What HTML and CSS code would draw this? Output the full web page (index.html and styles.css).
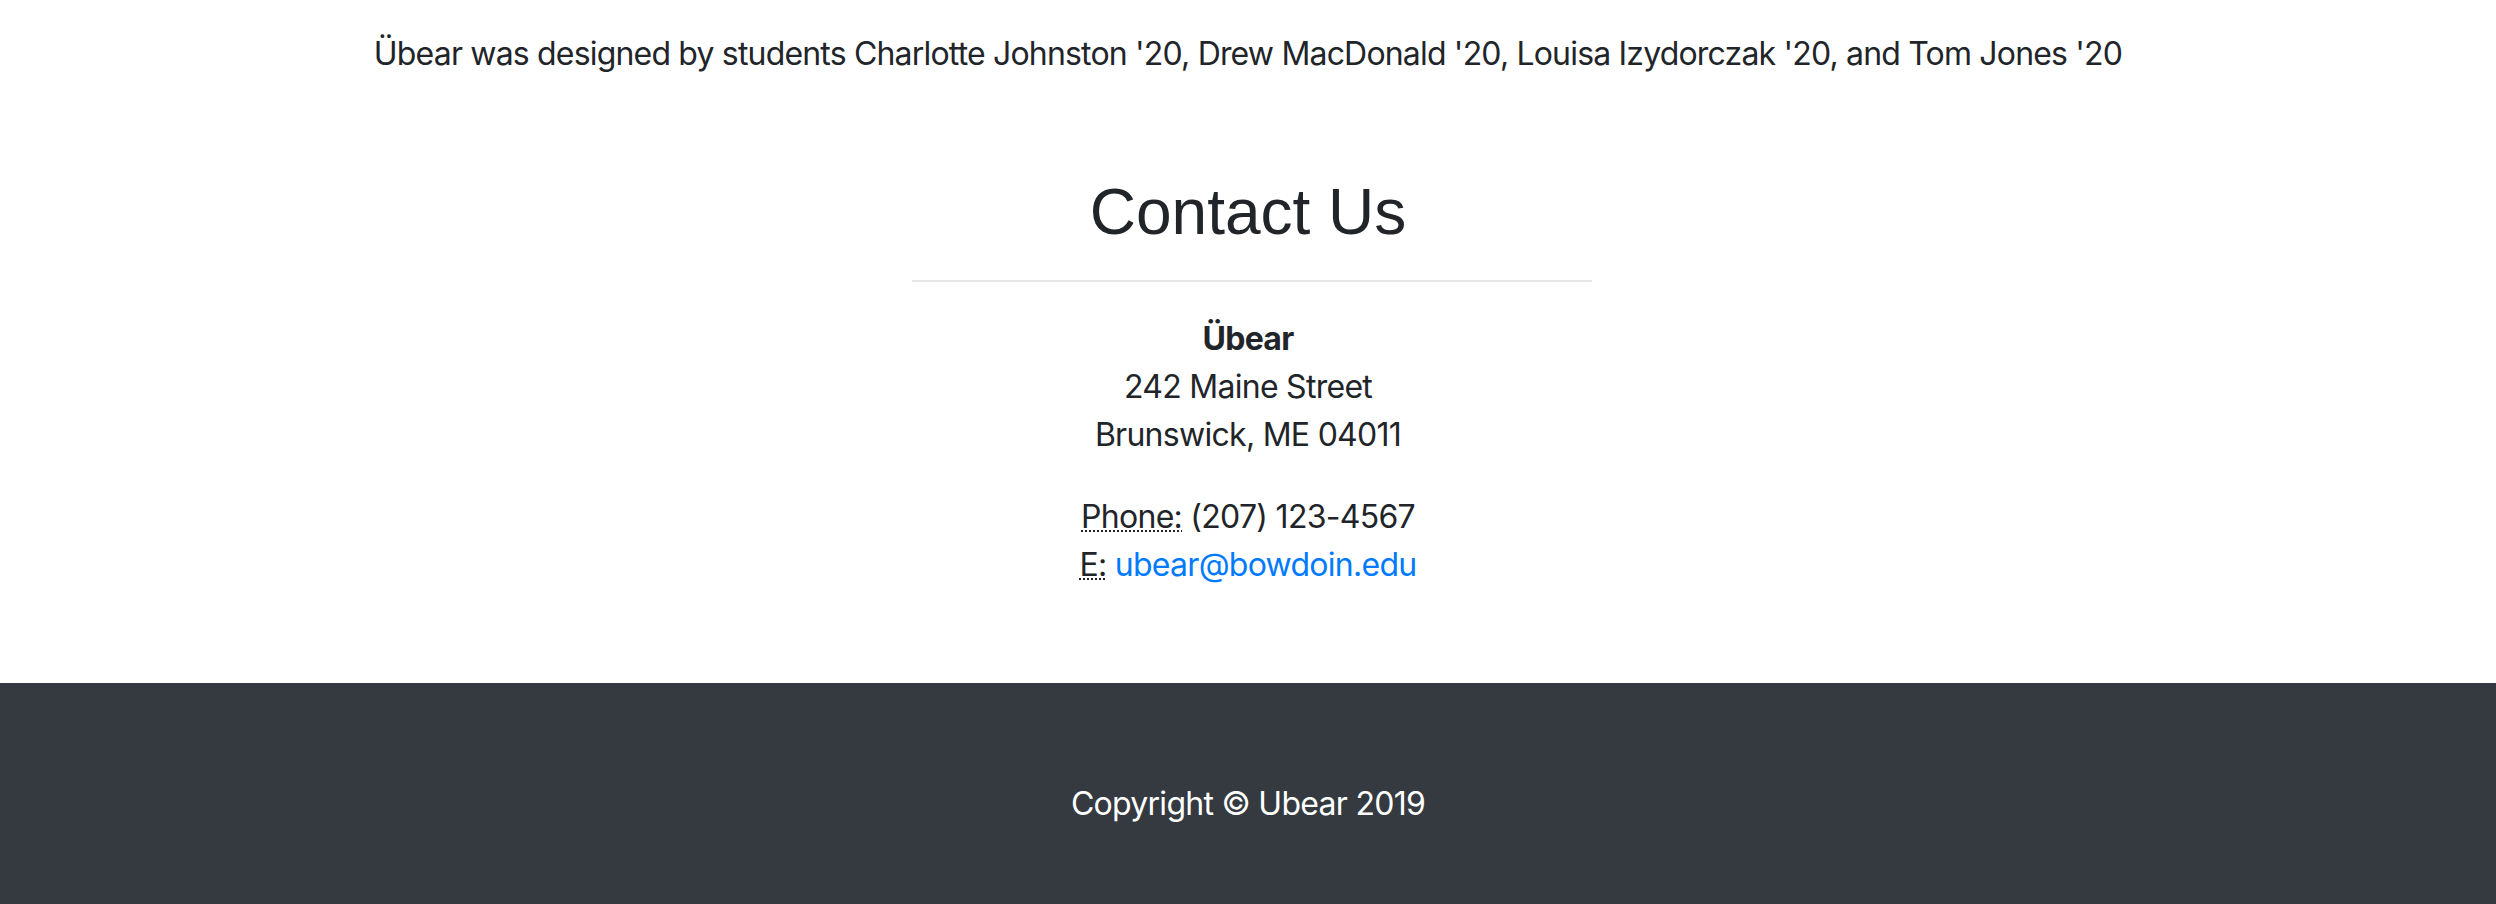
FILE: index.html
```html
<!DOCTYPE html>
<html lang="en">
<head>
<meta charset="utf-8">
<title>Übear – Contact</title>
<link rel="stylesheet" href="styles.css">
</head>
<body>
<main class="page">
  <p class="credits">Übear was designed by students Charlotte Johnston '20, Drew MacDonald '20, Louisa Izydorczak '20, and Tom Jones '20</p>
  <section class="contact">
    <h2 class="contact-title">Contact Us</h2>
    <hr class="divider">
    <address class="address address-main">
      <strong>Übear</strong><br>
      242 Maine Street<br>
      Brunswick, ME 04011
    </address>
    <address class="address">
      <abbr title="Phone">Phone:</abbr> (207) 123-4567<br>
      <abbr title="Email">E:</abbr> <a class="mail" href="mailto:ubear@bowdoin.edu">ubear@bowdoin.edu</a>
    </address>
  </section>
</main>
<footer class="site-footer">
  <p class="copyright">Copyright © Ubear 2019</p>
</footer>
</body>
</html>
```

FILE: styles.css
```css
html, body {
  margin: 0;
  padding: 0;
  background: #ffffff;
}

body {
  color: #212529;
  font-family: Inter, "Noto Sans", "Liberation Sans", sans-serif;
  font-size: 32px;
  line-height: 48px;
  letter-spacing: -0.72px;
}

.page {
  text-align: center;
}

.credits {
  margin: 0;
  padding-top: 30px;
  font-size: 32px;
  line-height: 48px;
  letter-spacing: -0.82px;
  color: #212529;
}

.contact {
  padding-bottom: 62px;
}

.contact-title {
  margin: 96px 0 0;
  font-family: "Liberation Sans", Arial, sans-serif;
  font-weight: 400;
  font-size: 64px;
  line-height: 1.2;
  letter-spacing: 0;
  color: #212529;
}

.divider {
  box-sizing: border-box;
  width: 680px;
  height: 0;
  margin: 29px 0 33px calc(50% - 336px);
  border: 0;
  border-top: 2px solid #e5e5e5;
}

.address {
  margin: 0 0 32px;
  font-style: normal;
  font-size: 32px;
  line-height: 48px;
}

.address-main {
  margin-bottom: 34px;
}

.address strong {
  font-weight: 700;
}

.address abbr {
  text-decoration: underline dotted;
  text-decoration-thickness: 2px;
  text-underline-offset: 3px;
  cursor: help;
}

.mail {
  color: #007bff;
  text-decoration: none;
}

.site-footer {
  background: #343a40;
  padding: 97px 0 96px;
  text-align: center;
}

.copyright {
  margin: 0;
  color: #ffffff;
  font-size: 32px;
  line-height: 48px;
}
```
